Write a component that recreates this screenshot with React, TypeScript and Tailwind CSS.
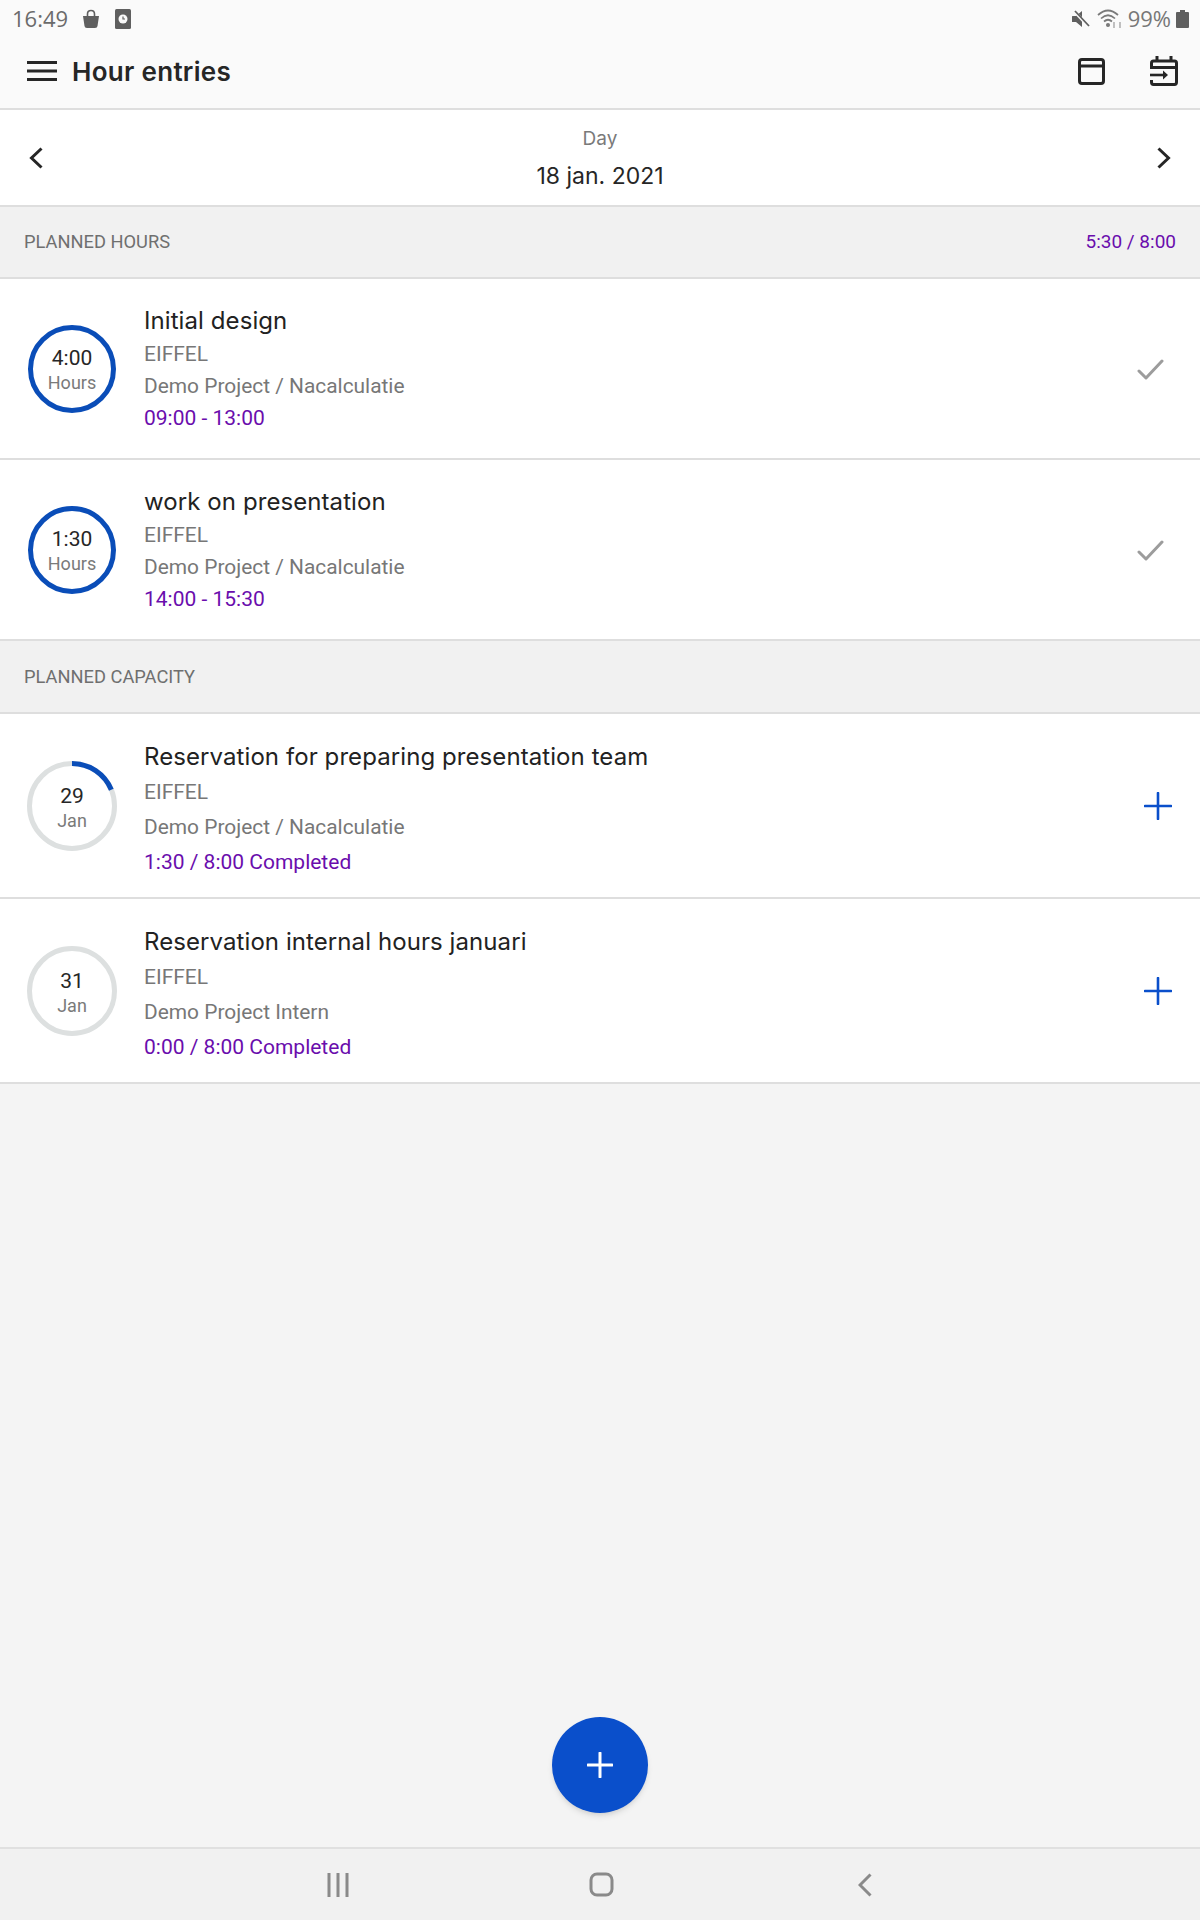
import React from "react";

const roboto = "font-['Roboto',sans-serif]";
const title = "font-['Inter',sans-serif]";
const status = "font-['Open_Sans',sans-serif]";

function Ring({ top, bottom, progress }: { top: string; bottom: string; progress?: number }) {
  const isCap = progress !== undefined;
  const r = isCap ? 42.5 : 41.5;
  const c = 2 * Math.PI * r;
  return (
    <div className="relative w-[90px] h-[90px] shrink-0">
      <svg width="90" height="90" viewBox="0 0 90 90" className="absolute inset-0">
        <circle cx="45" cy="45" r={r} fill="none" stroke={isCap ? "#dde0e0" : "#0a4db8"} strokeWidth="5" />
        {isCap && progress! > 0 && (
          <circle
            cx="45"
            cy="45"
            r={r}
            fill="none"
            stroke="#0a4db8"
            strokeWidth="5"
            strokeDasharray={`${c * progress!} ${c}`}
            transform="rotate(-90 45 45)"
          />
        )}
      </svg>
      <div className={`absolute inset-0 flex flex-col items-center justify-center ${isCap ? "pt-[5px]" : "pt-[4px]"}`}>
        <span className="text-[21px] leading-[25px] text-[#262626]">{top}</span>
        <span className="text-[18px] leading-[24px] text-[#7a7a7a]">{bottom}</span>
      </div>
    </div>
  );
}

function Check() {
  return (
    <svg width="27" height="22" viewBox="0 0 27 22" fill="none" stroke="#9c9c9c" strokeWidth="3" strokeLinecap="round" strokeLinejoin="round">
      <path d="M2 12 L9 19 L25 2" />
    </svg>
  );
}

function Plus() {
  return (
    <svg width="28" height="28" viewBox="0 0 28 28" fill="none" stroke="#0a4fcb" strokeWidth="2.6" strokeLinecap="round">
      <path d="M14 1 V27 M1 14 H27" />
    </svg>
  );
}

function Row({
  ring,
  name,
  client,
  project,
  info,
  action,
  capacity,
}: {
  ring: React.ReactNode;
  name: string;
  client: string;
  project: string;
  info: string;
  action: React.ReactNode;
  capacity?: boolean;
}) {
  return (
    <div
      className={`flex items-center bg-white border-b-2 border-[#dedede] ${
        capacity ? "h-[185px]" : "h-[181px]"
      }`}
    >
      <div className="w-[144px] flex justify-center shrink-0">{ring}</div>
      <div className={`flex-1 flex flex-col ${capacity ? "leading-[35px] pt-[8px]" : "leading-[32px] pt-[1px]"}`}>
        <span className={`${title} text-[24px] tracking-[0.08px] text-[#222222]`}>{name}</span>
        <span className="text-[21px] text-[#777777] mt-[1px]">{client}</span>
        <span className="text-[20.9px] text-[#777777]">{project}</span>
        <span className="text-[21px] text-[#6a0dad]">{info}</span>
      </div>
      <div className={capacity ? "pr-[28px]" : "pr-[36px] pt-[2px]"}>{action}</div>
    </div>
  );
}

function Section({ label, right, tall }: { label: string; right?: string; tall?: boolean }) {
  return (
    <div
      className={`${tall ? "h-[73px]" : "h-[72px]"} flex items-center justify-between px-[24px] bg-[#f1f1f1] border-b-2 border-[#dedede]`}
    >
      <span className="text-[18.3px] text-[#6f6f6f]">{label}</span>
      {right && <span className="text-[19px] text-[#6a0dad]">{right}</span>}
    </div>
  );
}

export default function App() {
  return (
    <div className={`${roboto} relative w-[1200px] h-[1920px] bg-[#f4f4f4] flex flex-col overflow-hidden`}>
      <div className="bg-[#fafafa] border-b-2 border-[#dedede] h-[110px] shrink-0 flex flex-col">
        <div className="h-[36px] flex items-center justify-between pl-[12px] pr-[11px] pt-[1px]">
          <div className="flex items-center">
            <span className={`${status} text-[22px] text-[#6b6b6b]`}>16:49</span>
            <svg width="18" height="20" viewBox="0 0 18 20" className="ml-[14px]" fill="#5f5f5f">
              <path d="M1 7 H17 L15.5 17 Q15.3 19 13 19 H5 Q2.7 19 2.5 17 Z" />
              <path d="M5.5 8 V5 Q5.5 1.5 9 1.5 Q12.5 1.5 12.5 5 V8" fill="none" stroke="#5f5f5f" strokeWidth="1.6" />
            </svg>
            <svg width="18" height="20" viewBox="0 0 18 20" className="ml-[14px]">
              <rect x="1" y="0" width="16" height="20" rx="1.5" fill="#5f5f5f" />
              <circle cx="9" cy="10" r="4.5" fill="#fafafa" />
              <path d="M9 7.5 V10 H11" fill="none" stroke="#5f5f5f" strokeWidth="1.2" />
            </svg>
          </div>
          <div className="flex items-center">
            <svg width="18" height="18" viewBox="0 0 18 18" fill="#5f5f5f">
              <path d="M0 6 H4 L10 1 V13 Z" />
              <path d="M0 6 V12 H4 L10 17 V9 Z" />
              <path d="M2 1 L17 17" stroke="#fafafa" strokeWidth="3" />
              <path d="M3 1 L17 16" stroke="#5f5f5f" strokeWidth="1.8" />
            </svg>
            <svg width="26" height="20" viewBox="0 0 26 20" fill="none" className="ml-[7px]" stroke="#7a7a7a" strokeWidth="1.7">
              <path d="M1 6 Q11 -3 21 6" />
              <path d="M4 9.5 Q11 3 18 9.5" />
              <path d="M7 12.5 Q11 9 15 12.5" />
              <circle cx="11" cy="16" r="1.2" fill="#7a7a7a" />
              <path d="M17 13 V19 M23 13 V19" stroke="#b5b5b5" />
            </svg>
            <span className={`${status} text-[22px] text-[#777777] ml-[5px]`}>99%</span>
            <svg width="13" height="18" viewBox="0 0 13 18" fill="#5f5f5f" className="ml-[5px]">
              <path d="M4 0 H9 V2 H12 Q13 2 13 3 V17 Q13 18 12 18 H1 Q0 18 0 17 V3 Q0 2 1 2 H4 Z" />
            </svg>
          </div>
        </div>
        <div className="flex-1 flex items-center pl-[27px] pr-[22px] pb-[2px]">
          <svg width="30" height="22" viewBox="0 0 30 22" stroke="#262626" strokeWidth="3">
            <path d="M0 2.5 H30 M0 11 H30 M0 19.5 H30" />
          </svg>
          <span className={`${title} ml-[15px] text-[26px] tracking-[0.3px] font-semibold text-[#262626] flex-1`}>Hour entries</span>
          <svg width="27" height="27" viewBox="0 0 27 27" fill="none" stroke="#262626" strokeWidth="3" strokeLinejoin="round">
            <rect x="1.5" y="1.5" width="24" height="24" rx="2.5" />
            <path d="M1.5 8 H25.5" />
          </svg>
          <svg width="28" height="30" viewBox="0 0 28 30" fill="none" stroke="#262626" strokeWidth="3" className="ml-[45px]">
            <path d="M1.5 13 V7 Q1.5 5 3.5 5 H24.5 Q26.5 5 26.5 7 V26 Q26.5 28.5 24.5 28.5 H3.5 Q1.5 28.5 1.5 26 V24" />
            <path d="M7 0 V5 M21 0 V5 M1.5 11.5 H26.5" />
            <path d="M0 19 H14" strokeWidth="2.6" />
            <path d="M13 14.5 L18 19 L13 23.5 Z" fill="#262626" stroke="none" />
          </svg>
        </div>
      </div>

      <div className="bg-white border-b-2 border-[#dedede] h-[97px] shrink-0 flex items-center justify-between px-[29px]">
        <svg width="14" height="22" viewBox="0 0 14 22" fill="none" stroke="#262626" strokeWidth="3">
          <path d="M12.5 1.5 L2.5 11 L12.5 20.5" />
        </svg>
        <div className="flex flex-col items-center">
          <span className={`${title} text-[19px] leading-[36px] text-[#7a7a7a]`}>Day</span>
          <span className={`${title} text-[23px] leading-[36px] pt-[1px] text-[#262626]`}>18 jan. 2021</span>
        </div>
        <svg width="14" height="22" viewBox="0 0 14 22" fill="none" stroke="#262626" strokeWidth="3">
          <path d="M1.5 1.5 L11.5 11 L1.5 20.5" />
        </svg>
      </div>

      <Section label="PLANNED HOURS" right="5:30 / 8:00" />
      <Row
        ring={<Ring top="4:00" bottom="Hours" />}
        name="Initial design"
        client="EIFFEL"
        project="Demo Project / Nacalculatie"
        info="09:00 - 13:00"
        action={<Check />}
      />
      <Row
        ring={<Ring top="1:30" bottom="Hours" />}
        name="work on presentation"
        client="EIFFEL"
        project="Demo Project / Nacalculatie"
        info="14:00 - 15:30"
        action={<Check />}
      />
      <Section label="PLANNED CAPACITY" tall />
      <Row
        capacity
        ring={<Ring top="29" bottom="Jan" progress={0.1875} />}
        name="Reservation for preparing presentation team"
        client="EIFFEL"
        project="Demo Project / Nacalculatie"
        info="1:30 / 8:00 Completed"
        action={<Plus />}
      />
      <Row
        capacity
        ring={<Ring top="31" bottom="Jan" progress={0} />}
        name="Reservation internal hours januari"
        client="EIFFEL"
        project="Demo Project Intern"
        info="0:00 / 8:00 Completed"
        action={<Plus />}
      />

      <div className="flex-1" />

      <div className="h-[73px] shrink-0 bg-[#f1f1f1] border-t-2 border-[#e0e0e0] flex items-center justify-center relative">
        <div className="flex items-center justify-between w-[545px] ml-[-2px]">
          <svg width="22" height="24" viewBox="0 0 22 24" stroke="#8a8a8a" strokeWidth="3">
            <path d="M2 0 V24 M11 0 V24 M20 0 V24" />
          </svg>
          <svg width="25" height="25" viewBox="0 0 25 25" fill="none" stroke="#8a8a8a" strokeWidth="3" className="mr-[3px]">
            <rect x="2" y="2" width="21" height="21" rx="6" />
          </svg>
          <svg width="14" height="24" viewBox="0 0 14 24" fill="none" stroke="#8a8a8a" strokeWidth="3">
            <path d="M12.5 1.5 L2 12 L12.5 22.5" />
          </svg>
        </div>
      </div>

      <button className="absolute left-[552px] top-[1717px] w-[96px] h-[96px] rounded-full bg-[#0a4fcb] shadow-md flex items-center justify-center">
        <svg width="26" height="26" viewBox="0 0 26 26" fill="none" stroke="#ffffff" strokeWidth="3" strokeLinecap="round">
          <path d="M13 1 V25 M1 13 H25" />
        </svg>
      </button>
    </div>
  );
}
